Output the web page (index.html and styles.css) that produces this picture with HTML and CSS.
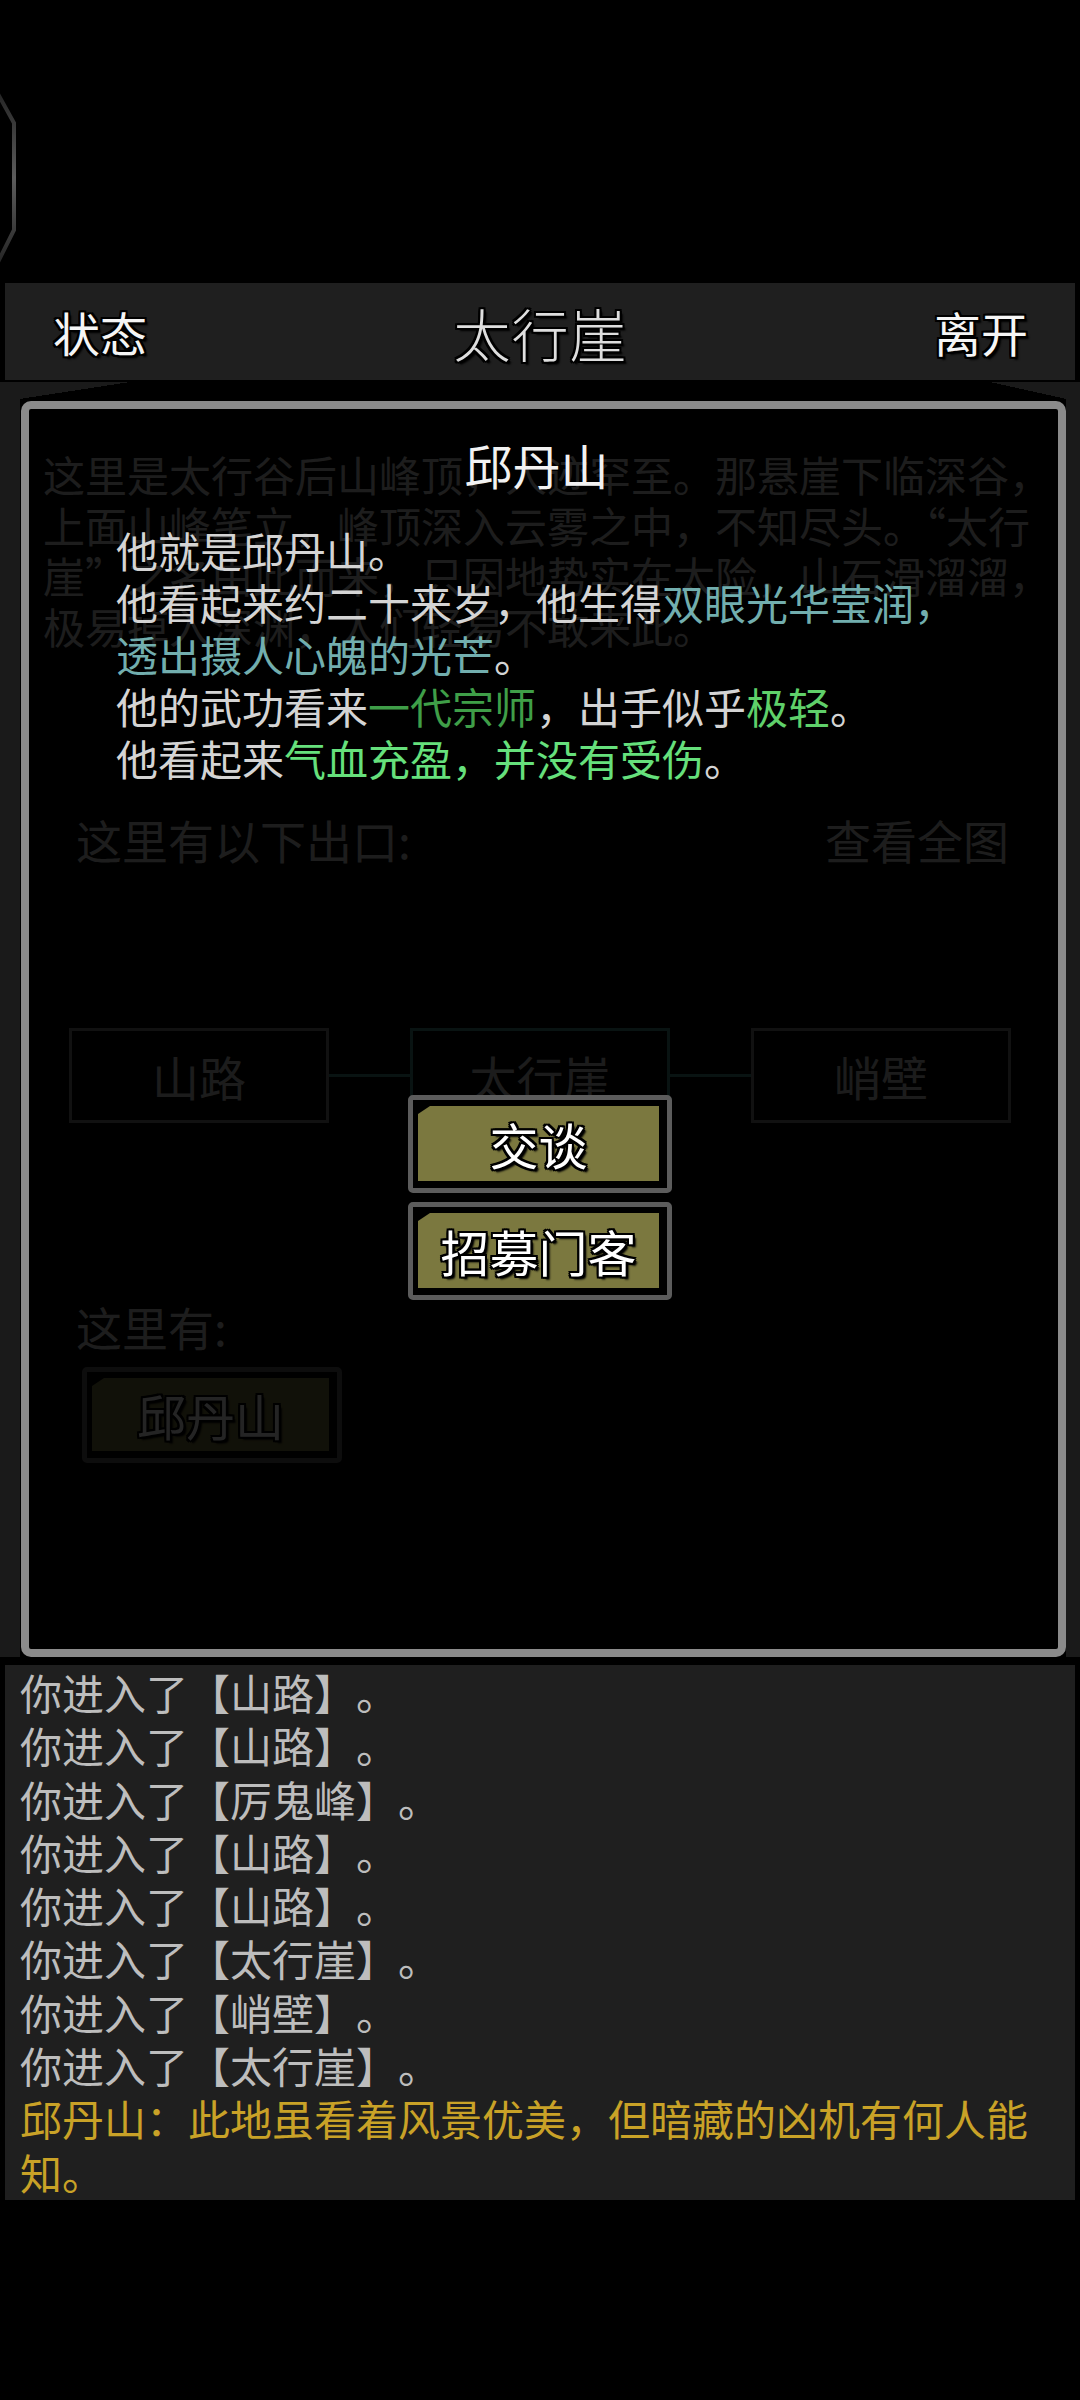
FILE: index.html
```html
<!DOCTYPE html>
<html lang="zh-CN">
<head>
<meta charset="utf-8">
<title>太行崖</title>
<link rel="stylesheet" href="styles.css">
</head>
<body>
<div class="screen">
  <div class="topspace">
    <svg class="deco" width="20" height="176" viewBox="0 0 20 176">
      <defs>
        <linearGradient id="decoGrad" x1="0" y1="0" x2="0" y2="1">
          <stop offset="0" stop-color="#262626"/>
          <stop offset="0.5" stop-color="#5c5c5c"/>
          <stop offset="1" stop-color="#262626"/>
        </linearGradient>
      </defs>
      <polyline points="-2,4 14,33 14,140 -2,172" fill="none" stroke="url(#decoGrad)" stroke-width="4"/>
    </svg>
  </div>

  <header class="topbar">
    <span class="tb-btn">状态</span>
    <span class="tb-title">太行崖</span>
    <span class="tb-btn">离开</span>
  </header>

  <main class="room">
    <p class="room-desc">这里是太行谷后山峰顶，人迹罕至。那悬崖下临深谷，<br>上面山峰笔立，峰顶深入云雾之中，不知尽头。“太行<br>崖”之名由此而来，只因地势实在太险，山石滑溜溜，<br>极易掉入深渊，人们轻易不敢来此。</p>

    <div class="exit-head"><span>这里有以下出口:</span><span>查看全图</span></div>

    <div class="exits">
      <div class="exit">山路</div>
      <div class="link"></div>
      <div class="exit exit-cur">太行崖</div>
      <div class="link"></div>
      <div class="exit">峭壁</div>
    </div>

    <div class="here-head">这里有:</div>
    <div class="here-list">
      <div class="btn btn-npc"><span class="btn-face">邱丹山</span></div>
    </div>

    <div class="dialog">
      <div class="dlg-title">邱丹山</div>
      <div class="dlg-desc">
        <p>他就是邱丹山。</p>
        <p>他看起来约二十来岁，他生得<span class="c-teal">双眼光华莹润，透出摄人心魄的光芒</span>。</p>
        <p>他的武功看来<span class="c-green">一代宗师</span>，出手似乎<span class="c-lime">极轻</span>。</p>
        <p>他看起来<span class="c-bright">气血充盈，并没有受伤</span>。</p>
      </div>
      <div class="dlg-actions">
        <div class="btn"><span class="btn-face">交谈</span></div>
        <div class="btn"><span class="btn-face">招募门客</span></div>
      </div>
    </div>
  </main>

  <section class="log">
    <p>你进入了【山路】。</p>
    <p>你进入了【山路】。</p>
    <p>你进入了【厉鬼峰】。</p>
    <p>你进入了【山路】。</p>
    <p>你进入了【山路】。</p>
    <p>你进入了【太行崖】。</p>
    <p>你进入了【峭壁】。</p>
    <p>你进入了【太行崖】。</p>
    <p class="say">邱丹山：此地虽看着风景优美，但暗藏的凶机有何人能知。</p>
  </section>
</div>
</body>
</html>
```

FILE: styles.css
```css
* {
  box-sizing: border-box;
}

html,
body {
  margin: 0;
  padding: 0;
  background: #000;
}

body {
  width: 1080px;
  height: 2400px;
  overflow: hidden;
  font-family: "Noto Sans CJK SC", "Noto Sans", sans-serif;
  color: #c8c8c8;
  text-spacing-trim: space-all;
}

.screen {
  width: 1080px;
  display: flex;
  flex-direction: column;
}

/* top black area with the side ornament */
.topspace {
  height: 283px;
  padding-top: 90px;
}

.deco {
  display: block;
}

/* title bar */
.topbar {
  margin: 0 5px;
  height: 97px;
  background: #1f1f1f;
  display: flex;
  align-items: center;
  justify-content: space-between;
  padding: 0 47px 0 48px;
}

.tb-btn,
.tb-title,
.btn-face {
  text-shadow:
    0 0 2px #000,
    2px 2px 0 #000,
    -2px -2px 0 #000,
    2px -2px 0 #000,
    -2px 2px 0 #000,
    0 2px 0 #000,
    2px 0 0 #000,
    0 -2px 0 #000,
    -2px 0 0 #000,
    3px 3px 2px #000;
}

.tb-btn {
  font-size: 47px;
  line-height: 60px;
  color: #f5f5f5;
}

.tb-title {
  font-size: 57px;
  line-height: 70px;
  font-weight: 300;
  color: #dedede;
  letter-spacing: 1px;
}

/* room panel (behind the dialog) */
.room {
  position: relative;
  height: 1283px;
  margin-top: 2px;
  padding-top: 67px;
  background:
    linear-gradient(to bottom right, #1a1a1a 50%, transparent 50%) left top / 130px 20px no-repeat,
    linear-gradient(to bottom left, #1a1a1a 50%, transparent 50%) right top / 90px 20px no-repeat,
    linear-gradient(to right, #1a1a1a 20px, transparent 20px, transparent 1066px, #1a1a1a 1066px) 0 0 / 100% calc(100% - 8px) no-repeat,
    #000;
}

.room-desc {
  margin: 0 0 0 43px;
  font-size: 42px;
  line-height: 50.5px;
  color: #cacaca;
  text-spacing-trim: normal;
}

.exit-head {
  margin: 158px 71px 0 76px;
  display: flex;
  justify-content: space-between;
  font-size: 46px;
  line-height: 60px;
  color: #cacaca;
}

.exits {
  margin: 159px 0 0 69px;
  display: flex;
  align-items: center;
}

.exit {
  width: 260px;
  height: 95px;
  border: 3px solid #7a7a7a;
  display: flex;
  align-items: center;
  justify-content: center;
  font-size: 47px;
  color: #c4c4c4;
}

.exit-cur {
  border-color: #3f8a80;
}

.link {
  width: 81px;
  height: 3px;
  background: #3f8a80;
}

.here-head {
  margin: 173px 0 0 76px;
  font-size: 46px;
  line-height: 60px;
  color: #cacaca;
}

.here-list {
  margin: 11px 0 0 82px;
  display: flex;
}

/* olive buttons */
.btn {
  width: 264px;
  height: 98px;
  border: 5px solid #5c5c5c;
  border-radius: 5px;
  background: #000;
  padding: 6px 8px 7px 5px;
  display: flex;
}

.btn-npc {
  width: 260px;
  height: 96px;
}

.btn-face {
  flex: 1;
  background: #7b783f;
  clip-path: polygon(12px 0, 100% 0, 100% 100%, 0 100%, 0 8px);
  display: flex;
  align-items: center;
  justify-content: center;
  font-size: 49px;
  line-height: 60px;
  color: #fff;
}

/* dialog overlay */
.dialog {
  position: absolute;
  left: 21px;
  top: 19px;
  width: 1045px;
  height: 1256px;
  border: 8px solid #8b8b8b;
  border-radius: 10px;
  background: rgba(0, 0, 0, 0.86);
  padding-top: 25px;
}

.dlg-title {
  text-align: center;
  font-size: 48px;
  line-height: 60px;
  color: #f2f2f2;
  padding-right: 14px;
}

.dlg-desc {
  margin: 30px 0 0 87px;
  width: 860px;
  font-size: 42px;
  line-height: 52px;
  color: #d4d4d4;
}

.dlg-desc p {
  margin: 0;
}

.c-teal {
  color: #72aeae;
}

.c-green {
  color: #3f9e48;
}

.c-lime {
  color: #5fd06a;
}

.c-bright {
  color: #66e07c;
}

.dlg-actions {
  margin-top: 311px;
  padding-right: 7px;
  display: flex;
  flex-direction: column;
  align-items: center;
  gap: 9px;
}

/* message log */
.log {
  margin: 0 5px;
  height: 535px;
  background: #1f1f1f;
  padding: 0 15px;
  font-size: 42px;
  line-height: 53.3px;
  color: #bdbdbd;
}

.log p {
  margin: 0;
}

.log .say {
  color: #c9a227;
}
```
